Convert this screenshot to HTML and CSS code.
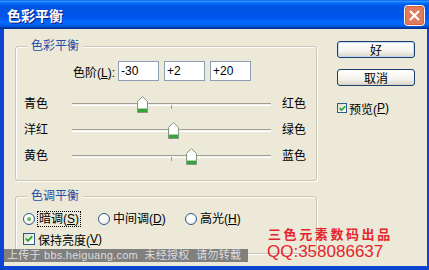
FILE: index.html
```html
<!DOCTYPE html>
<html lang="zh-CN">
<head>
  <meta charset="UTF-8">
  <title>色彩平衡</title>
  <link rel="stylesheet" href="styles.css">
</head>
<body>
  <div class="titlebar">
    <span class="title">色彩平衡</span>
    <span class="close-btn">
      <svg width="21" height="21" viewBox="0 0 21 21">
        <rect x="0.5" y="0.5" width="20" height="20" rx="3" fill="#d9603c" stroke="#fff"/>
        <rect x="2" y="2" width="17" height="17" rx="2" fill="#e2795a"/>
        <path d="M6 6 L15 15 M15 6 L6 15" stroke="#fff" stroke-width="2.2"/>
      </svg>
    </span>
  </div>
  <div class="frame">
    <div class="client">
      <div class="main">
        <div class="group group-color">
          <div class="group-title">色彩平衡</div>
          <div class="levels">
            <label class="levels-label">色阶(<u>L</u>):</label>
            <input class="num" type="text" value="-30">
            <input class="num" type="text" value="+2">
            <input class="num" type="text" value="+20">
          </div>
          <div class="slider-row">
            <span class="side-left">青色</span>
            <div class="track">
              <span class="tick"></span>
              <span class="thumb" style="left: 35%"></span>
            </div>
            <span class="side-right">红色</span>
          </div>
          <div class="slider-row">
            <span class="side-left">洋红</span>
            <div class="track">
              <span class="tick"></span>
              <span class="thumb" style="left: 51%"></span>
            </div>
            <span class="side-right">绿色</span>
          </div>
          <div class="slider-row">
            <span class="side-left">黄色</span>
            <div class="track">
              <span class="tick"></span>
              <span class="thumb" style="left: 60%"></span>
            </div>
            <span class="side-right">蓝色</span>
          </div>
        </div>
        <div class="group group-tone">
          <div class="group-title">色调平衡</div>
          <div class="radio-row">
            <label class="radio-item item-shadow"><span class="radio on"></span><span class="focus">暗调(<u>S</u>)</span></label>
            <label class="radio-item item-mid"><span class="radio"></span><span class="radio-text">中间调(<u>D</u>)</span></label>
            <label class="radio-item"><span class="radio"></span><span class="radio-text">高光(<u>H</u>)</span></label>
          </div>
          <label class="check-item keep-light">
            <span class="check">
              <svg width="8" height="8" viewBox="0 0 8 8"><path d="M0.8 3.6 L3 5.8 L7.2 1.4" fill="none" stroke="#21a121" stroke-width="1.8"/></svg>
            </span>保持亮度(<u>V</u>)
          </label>
        </div>
      </div>
      <div class="side">
        <button class="btn default">好</button>
        <button class="btn cancel">取消</button>
        <label class="check-item preview">
          <span class="check small">
            <svg width="7" height="7" viewBox="0 0 8 8"><path d="M0.8 3.6 L3 5.8 L7.2 1.4" fill="none" stroke="#21a121" stroke-width="1.8"/></svg>
          </span>预览(<u>P</u>)
        </label>
      </div>
      <div class="watermark">上传于 bbs.heiguang.com  未经授权  请勿转载</div>
      <div class="stamp-cn">三色元素数码出品</div>
      <div class="stamp-qq">QQ:358086637</div>
    </div>
  </div>
</body>
</html>
```

FILE: styles.css
```css
body {
  margin: 0;
  width: 429px;
  height: 270px;
  overflow: hidden;
  font-family: "Liberation Sans", "Noto Sans CJK SC", sans-serif;
  font-size: 12px;
  color: #000000;
  background-color: #0b45d2;
}
u {
  text-decoration: underline;
  text-underline-offset: 1px;
}
.titlebar {
  height: 29px;
  display: flex;
  justify-content: space-between;
  align-items: center;
  padding: 0 4px 0 7px;
  box-sizing: border-box;
  background: linear-gradient(to bottom, #0058ee 0%, #3593ff 4%, #288eff 6%, #127dff 8%, #036ffc 10%, #0262ee 14%, #0057e5 20%, #0054e3 24%, #0055eb 56%, #005bf5 66%, #026afe 76%, #0062ef 86%, #0052d6 92%, #0040ab 94%, #003092 100%);
}
.title {
  font-family: "Noto Sans CJK SC", sans-serif;
  font-size: 14px;
  font-weight: 700;
  line-height: 14px;
  color: #FFFFFF;
  text-shadow: 1px 1px 0 #0a1f8a;
  margin-top: 1px;
}
.close-btn {
  display: block;
  width: 21px;
  height: 21px;
  margin-top: 1px;
}
.close-btn svg {
  display: block;
}
.frame {
  height: 241px;
  border-left: 4px solid #0b45d2;
  border-right: 2px solid #0b45d2;
  border-bottom: 4px solid #0b45d2;
}
.client {
  position: relative;
  height: 237px;
  display: flex;
  padding-left: 11px;
  background-color: #ECE9D8;
  overflow: hidden;
}
.main {
  width: 302px;
  padding-top: 17px;
}
.group {
  border: 1px solid #c9c6b6;
  border-radius: 3px;
  box-shadow: 1px 1px 0 #ffffff, inset 1px 1px 0 #ffffff;
}
.group-title {
  width: fit-content;
  margin: -8px 0 0 11px;
  padding: 0 4px;
  height: 14px;
  line-height: 14px;
  color: #1f4ea8;
  background-color: #ECE9D8;
}
.group-color {
  padding-bottom: 11px;
}
.levels {
  display: flex;
  align-items: center;
  margin-top: 8px;
  height: 20px;
}
.levels-label {
  width: 102px;
  padding-right: 3px;
  box-sizing: border-box;
  text-align: right;
}
.num {
  width: 41px;
  height: 20px;
  box-sizing: border-box;
  margin: 0 5px 0 0;
  padding: 0 2px;
  border: 1px solid #8c9fb4;
  background-color: #FFFFFF;
  font-family: "Liberation Sans", sans-serif;
  font-size: 12px;
  color: #000000;
  outline: none;
}
.slider-row {
  display: flex;
  align-items: center;
  height: 26px;
  padding-left: 8px;
}
.levels + .slider-row {
  margin-top: 10px;
}
.side-left {
  width: 48px;
  margin-top: -3px;
}
.side-right {
  margin-left: 11px;
  margin-top: -3px;
}
.track {
  position: relative;
  width: 199px;
  height: 3px;
  box-sizing: border-box;
  border-top: 1px solid #a19f93;
  border-bottom: 1px solid #ffffff;
  background-color: #f2f1ea;
}
.tick {
  position: absolute;
  left: 99px;
  top: 1px;
  width: 1px;
  height: 4px;
  background-color: #a19f93;
}
.thumb {
  position: absolute;
  top: -8px;
  width: 11px;
  height: 17px;
  margin-left: -5px;
  background: url("data:image/svg+xml,%3Csvg xmlns='http://www.w3.org/2000/svg' width='11' height='17'%3E%3Cpath d='M0.5 5.5 L5.5 0.5 L10.5 5.5 V16.5 H0.5 Z' fill='%23f7f7f4' stroke='%23859883'/%3E%3Crect x='1' y='13' width='9' height='3' fill='%2339a23a'/%3E%3Crect x='1' y='12' width='9' height='1' fill='%23a8d8a8'/%3E%3Crect x='2' y='4' width='7' height='8' fill='%23ffffff'/%3E%3C/svg%3E") no-repeat;
}
.group-tone {
  margin-top: 15px;
  padding-bottom: 6px;
}
.radio-row {
  display: flex;
  align-items: center;
  margin-top: 8px;
  height: 16px;
  padding-left: 7px;
}
.radio-item {
  display: flex;
  align-items: center;
}
.item-shadow {
  width: 75px;
}
.item-mid {
  width: 87px;
}
.radio {
  width: 12px;
  height: 12px;
  box-sizing: border-box;
  border: 1px solid #2d5b8a;
  border-radius: 50%;
  margin-right: 3px;
  background: radial-gradient(circle at 40% 40%, #ffffff 40%, #dcd9cc 100%);
  position: relative;
}
.radio.on::after {
  content: "";
  position: absolute;
  left: 3px;
  top: 3px;
  width: 4px;
  height: 4px;
  border-radius: 50%;
  background: radial-gradient(circle at 35% 35%, #7fd27f, #1f9c1f);
}
.focus {
  padding: 0 1px;
  line-height: 14px;
  outline: 1px dotted #000000;
}
.radio-text {
  line-height: 14px;
}
.check-item {
  display: flex;
  align-items: center;
}
.keep-light {
  margin-top: 4px;
  height: 16px;
  padding-left: 7px;
}
.check {
  width: 12px;
  height: 12px;
  box-sizing: border-box;
  border: 1px solid #2d5b8a;
  margin-right: 3px;
  background: linear-gradient(135deg, #dcdad0, #ffffff);
  display: flex;
  align-items: center;
  justify-content: center;
}
.check svg {
  display: block;
}
.check.small {
  width: 10px;
  height: 10px;
  margin-right: 2px;
}
.side {
  margin-left: 20px;
  padding-top: 12px;
  display: flex;
  flex-direction: column;
  align-items: flex-start;
}
.btn {
  width: 78px;
  height: 17px;
  padding: 0;
  border: 1px solid #1d3f6e;
  border-radius: 3px;
  background: linear-gradient(to bottom, #ffffff 0%, #f4f3ee 60%, #d8d4c6 100%);
  font-family: "Noto Sans CJK SC", sans-serif;
  font-size: 12px;
  line-height: 15px;
  color: #000000;
}
.btn.default {
  box-shadow: inset 0 0 0 1px #c4d7f8;
}
.btn.cancel {
  margin-top: 11px;
}
.preview {
  margin-top: 15px;
  height: 14px;
}
.watermark {
  position: absolute;
  left: 0;
  top: 220px;
  width: 244px;
  height: 13px;
  padding-left: 3px;
  box-sizing: border-box;
  background-color: rgba(118, 118, 118, 0.92);
  color: #dddddd;
  font-size: 11px;
  line-height: 13px;
  letter-spacing: 0.25px;
  white-space: pre;
}
.stamp-cn {
  position: absolute;
  left: 264px;
  top: 198px;
  font-family: "Noto Sans CJK SC", sans-serif;
  font-size: 13px;
  font-weight: 700;
  line-height: 14px;
  letter-spacing: 2.6px;
  color: #e4252d;
}
.stamp-qq {
  position: absolute;
  left: 263px;
  top: 214px;
  font-family: "Liberation Sans", sans-serif;
  font-size: 17px;
  line-height: 17px;
  color: #e4252d;
}
```
